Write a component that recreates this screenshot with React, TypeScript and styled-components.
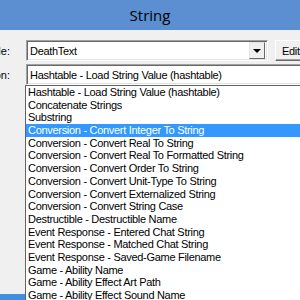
import styled, { createGlobalStyle } from "styled-components";

const GlobalStyle = createGlobalStyle`
  html, body {
    margin: 0;
    padding: 0;
  }
  body {
    width: 300px;
    height: 300px;
    overflow: hidden;
    background: #f0f0f0;
    font-family: "Liberation Sans", Arial, sans-serif;
    font-size: 11px;
    color: #000;
  }
`;

const items = [
  "Hashtable - Load String Value (hashtable)",
  "Concatenate Strings",
  "Substring",
  "Conversion - Convert Integer To String",
  "Conversion - Convert Real To String",
  "Conversion - Convert Real To Formatted String",
  "Conversion - Convert Order To String",
  "Conversion - Convert Unit-Type To String",
  "Conversion - Convert Externalized String",
  "Conversion - Convert String Case",
  "Destructible - Destructible Name",
  "Event Response - Entered Chat String",
  "Event Response - Matched Chat String",
  "Event Response - Saved-Game Filename",
  "Game - Ability Name",
  "Game - Ability Effect Art Path",
  "Game - Ability Effect Sound Name",
  "Game - Ability Effect Model Path",
];

const App = () => {
  return (
    <Window>
      <GlobalStyle />
      <TitleBar>String</TitleBar>
      <Body>
        <Form>
          <Label>
            <span>Variable:</span>
          </Label>
          <FieldRow>
            <Combo $width={242}>
              <ComboText>DeathText</ComboText>
              <DropButton>
                <Arrow />
              </DropButton>
            </Combo>
            <EditButton>Edit...</EditButton>
          </FieldRow>
          <Label>
            <span>Function:</span>
          </Label>
          <FieldRow>
            <ComboWrap>
              <Combo $width={340}>
                <ComboText>Hashtable - Load String Value (hashtable)</ComboText>
              </Combo>
              <DropList>
                {items.map((item, i) => (
                  <ListItem key={item} $selected={i === 3}>
                    {item}
                  </ListItem>
                ))}
              </DropList>
            </ComboWrap>
          </FieldRow>
        </Form>
        <BackArea>
          <BackSelected />
        </BackArea>
      </Body>
    </Window>
  );
};

export default App;

const Window = styled.div`
  width: 300px;
  height: 300px;
  display: flex;
  flex-direction: column;
  overflow: hidden;
`;

const TitleBar = styled.div`
  height: 30px;
  flex: none;
  background: #5b8fd1;
  display: flex;
  align-items: center;
  justify-content: center;
  font-family: "Open Sans", "Noto Sans", sans-serif;
  font-size: 15px;
  color: #000;
  padding-bottom: 1px;
  box-sizing: border-box;
`;

const Body = styled.div`
  flex: 1;
  display: flex;
  flex-direction: column;
  padding-top: 10px;
  min-height: 0;
`;

const Form = styled.div`
  display: grid;
  grid-template-columns: 26px 1fr;
  row-gap: 3px;
  flex: none;
`;

const Label = styled.div`
  height: 21px;
  display: flex;
  align-items: center;
  justify-content: flex-end;
  overflow: hidden;
  white-space: nowrap;
  padding-right: 16px;
  font-size: 11px;
`;

const FieldRow = styled.div`
  display: flex;
  align-items: center;
  gap: 7px;
  white-space: nowrap;
`;

const ComboWrap = styled.div`
  position: relative;
`;

const Combo = styled.div<{ $width: number }>`
  width: ${(p) => p.$width}px;
  height: 21px;
  flex: none;
  box-sizing: border-box;
  display: flex;
  align-items: center;
  background: #fff;
  border: 1px solid;
  border-color: #a0a0a0 #fff #fff #a0a0a0;
  box-shadow: inset 1px 1px 0 #696969, inset -1px -1px 0 #e3e3e3;
  padding: 2px;
`;

const ComboText = styled.div`
  flex: 1;
  padding-left: 1px;
  letter-spacing: -0.3px;
  overflow: hidden;
`;

const DropButton = styled.div`
  width: 16px;
  height: 17px;
  box-sizing: border-box;
  background: #f0f0f0;
  border: 1px solid;
  border-color: #e3e3e3 #696969 #696969 #e3e3e3;
  display: flex;
  align-items: center;
  justify-content: center;
`;

const Arrow = styled.div`
  width: 0;
  height: 0;
  border-left: 4px solid transparent;
  border-right: 4px solid transparent;
  border-top: 4px solid #000;
`;

const EditButton = styled.div`
  flex: none;
  width: 75px;
  height: 21px;
  box-sizing: border-box;
  background: #f0f0f0;
  border: 1px solid;
  border-color: #fff #696969 #696969 #fff;
  box-shadow: inset -1px -1px 0 #a0a0a0;
  display: flex;
  align-items: center;
  padding-left: 6px;
  letter-spacing: -0.3px;
`;

const DropList = styled.div`
  position: absolute;
  left: -1px;
  top: 21px;
  width: 360px;
  height: 240px;
  box-sizing: border-box;
  background: #fff;
  border: 1px solid #646464;
  padding-top: 0;
  z-index: 2;
`;

const ListItem = styled.div<{ $selected: boolean }>`
  height: 12.7px;
  line-height: 12.7px;
  padding-left: 2px;
  white-space: nowrap;
  letter-spacing: -0.3px;
  background: ${(p) => (p.$selected ? "#3399ff" : "transparent")};
  color: ${(p) => (p.$selected ? "#fff" : "#000")};
`;

const BackArea = styled.div`
  flex: 1;
  display: flex;
  flex-direction: column;
  justify-content: flex-end;
`;

const BackSelected = styled.div`
  height: 6px;
  background: #3d8fe0;
`;
